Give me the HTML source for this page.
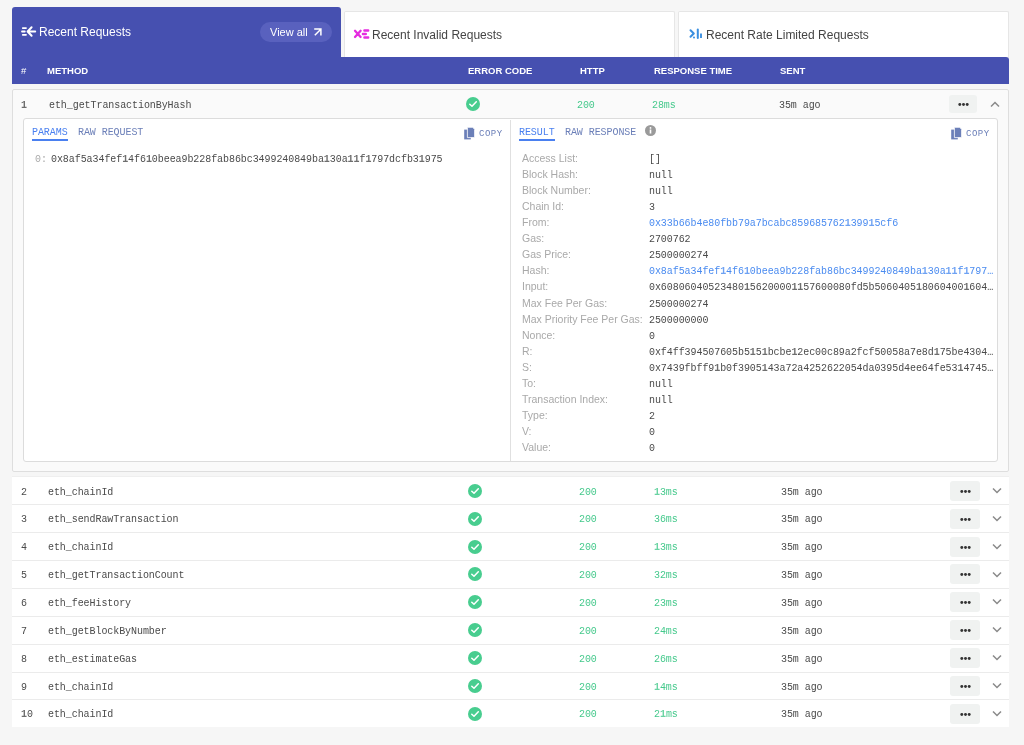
<!DOCTYPE html>
<html><head><meta charset="utf-8">
<style>
*{box-sizing:border-box;margin:0;padding:0}
html,body{width:1024px;height:745px;overflow:hidden;background:#f6f6f6;font-family:"Liberation Sans",sans-serif;}
.abs{position:absolute}
.mono{font-family:"Liberation Mono",monospace;font-size:10px;letter-spacing:-0.07px;white-space:nowrap;transform:scaleY(1.15);transform-origin:0 50%}
.tab{position:absolute;top:11px;height:47px;background:#fff;border:1px solid #e6e6e6;border-bottom:none;border-radius:2px 2px 0 0;}
.t{position:absolute;font-size:12px;color:#444;white-space:nowrap}
.g{color:#45c98c!important}
.dots{position:absolute;width:30px;height:20px;background:#f0f2f1;border-radius:3px;}
.fld{position:absolute;font-size:10.5px;color:#a9a9a9;line-height:16px;white-space:nowrap}
.val{position:absolute;line-height:16px;color:#4a4a4a;white-space:nowrap;overflow:hidden;text-overflow:ellipsis;width:347px}
.blue{color:#4a8bf0!important}
b{opacity:0.8}
</style></head><body><div style="position:absolute;left:0;top:0;width:1024px;height:745px;will-change:transform">
<div class="abs" style="left:12px;top:7px;width:329px;height:51px;background:#4650b0;border-radius:3px 3px 0 0"></div>
<div class="tab" style="left:344px;width:331px"></div>
<div class="tab" style="left:678px;width:331px"></div>
<div class="abs" style="left:12px;top:57px;width:997px;height:27px;background:#4650b0;border-radius:0 3px 0 0"></div>
<svg class="abs" style="left:18px;top:22px" width="22" height="18" viewBox="0 0 22 18"><g stroke="#fff" stroke-linecap="round" fill="none"><path d="M4.8 6.1 H8.0 M4.0 9.5 H6.8 M4.8 12.8 H8.0" stroke-width="1.8"/><path d="M13.6 5.3 L9.6 9.5 L13.6 13.7 M9.8 9.5 H17.2" stroke-width="2" stroke-linejoin="round"/></g></svg>
<span class="abs" style="left:39px;top:24px;font-size:12px;color:#fff;line-height:16px">Recent Requests</span>
<div class="abs" style="left:260px;top:22px;width:72px;height:20px;border-radius:10px;background:#5961be"></div>
<span class="abs" style="left:270px;top:24px;font-size:11px;color:#fff;line-height:16px">View all</span>
<svg class="abs" style="left:313px;top:27px" width="10" height="10" viewBox="0 0 10 10"><path d="M1.8 8.2 L7.3 2.7 M1.2 2 H7.9 V8.6" stroke="#fff" stroke-width="1.5" fill="none"/></svg>
<svg class="abs" style="left:350px;top:24px" width="25" height="20" viewBox="0 0 25 20"><g stroke="#e52ce0" stroke-linecap="round" fill="none"><path d="M5 6.8 L10.6 13 M10.6 6.8 L5 13" stroke-width="2.3"/><path d="M14.4 6.5 H18.2 M12.9 10 H15.8 M14.4 13.5 H18.2" stroke-width="2.4"/></g></svg>
<span class="abs" style="left:372px;top:27px;font-size:12px;color:#444;line-height:16px">Recent Invalid Requests</span>
<svg class="abs" style="left:684px;top:24px" width="25" height="20" viewBox="0 0 25 20"><g stroke="#3a8fe0" fill="none"><path d="M6.5 6.3 L9.8 9.5 L6.5 12.8" stroke-width="2" stroke-linecap="round" stroke-linejoin="round"/><path d="M13.8 5.5 V14" stroke-width="2" stroke-linecap="round"/><path d="M17 9.5 V14" stroke-width="1.9" stroke-linecap="butt"/></g><circle cx="10" cy="13.4" r="1" fill="#3a8fe0"/></svg>
<span class="abs" style="left:706px;top:27px;font-size:12px;color:#444;line-height:16px">Recent Rate Limited Requests</span>
<span class="abs" style="left:21px;top:65px;font-size:9.5px;color:#fff;line-height:12px">#</span>
<span class="abs" style="left:47px;top:65px;font-size:9.5px;font-weight:bold;color:#fff;line-height:12px">METHOD</span>
<span class="abs" style="left:468px;top:65px;font-size:9.5px;font-weight:bold;color:#fff;line-height:12px">ERROR CODE</span>
<span class="abs" style="left:580px;top:65px;font-size:9.5px;font-weight:bold;color:#fff;line-height:12px">HTTP</span>
<span class="abs" style="left:654px;top:65px;font-size:9.5px;font-weight:bold;color:#fff;line-height:12px">RESPONSE TIME</span>
<span class="abs" style="left:780px;top:65px;font-size:9.5px;font-weight:bold;color:#fff;line-height:12px">SENT</span>
<div class="abs" style="left:12px;top:89px;width:997px;height:383px;background:#fafafa;border:1px solid #dedede;border-radius:2px"></div>
<span class="abs mono" style="left:21px;top:98px;line-height:16px;color:#4a4a4a;"><b>1</b></span>
<span class="abs mono" style="left:49px;top:98px;line-height:16px;color:#4a4a4a;">eth_getTransactionByHash</span>
<svg class="abs" style="left:466px;top:97px" width="14" height="14" viewBox="0 0 14 14"><circle cx="7" cy="7" r="7" fill="#48cd8f"/><path d="M3.8 7.2 L6 9.3 L10.3 4.8" stroke="#fff" stroke-width="1.5" fill="none" stroke-linecap="round" stroke-linejoin="round"/></svg>
<span class="abs mono" style="left:577px;top:98px;line-height:16px;color:#4a4a4a;color:#45c98c">200</span>
<span class="abs mono" style="left:652px;top:98px;line-height:16px;color:#4a4a4a;color:#45c98c">28ms</span>
<span class="abs mono" style="left:779px;top:98px;line-height:16px;color:#4a4a4a;">35m ago</span>
<div class="dots" style="left:949px;top:95px;width:28px;height:18px"></div>
<svg class="abs" style="left:957.5px;top:101.5px" width="11" height="5" viewBox="0 0 11 5"><g fill="#333"><circle cx="1.8" cy="2.5" r="1.45"/><circle cx="5.5" cy="2.5" r="1.45"/><circle cx="9.2" cy="2.5" r="1.45"/></g></svg>
<svg class="abs" style="left:990px;top:101px" width="10" height="7" viewBox="0 0 10 7"><path d="M1 5.5 L5 1.5 L9 5.5" stroke="#8a8a8a" stroke-width="1.5" fill="none"/></svg>
<div class="abs" style="left:23px;top:118px;width:975px;height:344px;background:#fff;border:1px solid #dcdcdc;border-radius:3px"></div>
<span class="abs mono" style="left:32px;top:126px;line-height:14px;color:#4a4a4a;color:#4a80f0">PARAMS</span>
<div class="abs" style="left:32px;top:139px;width:36px;height:2px;background:#4a80f0"></div>
<span class="abs mono" style="left:78px;top:126px;line-height:14px;color:#4a4a4a;color:#6b7fb8">RAW REQUEST</span>
<svg class="abs" style="left:464px;top:126.5px" width="12" height="13" viewBox="0 0 12 13"><rect x="0.2" y="2.6" width="6.6" height="9.8" fill="#6b7fb8"/><path d="M3.4 0.3 H8.6 L10.6 2.3 V10.6 H3.4 Z" fill="#6b7fb8" stroke="#fff" stroke-width="0.8"/></svg>
<span class="abs" style="left:479px;top:128px;font-family:Liberation Mono,monospace;font-size:9px;letter-spacing:0.5px;color:#6b7fb8;line-height:12px">COPY</span>
<span class="abs mono" style="left:35px;top:152px;line-height:16px;color:#4a4a4a;color:#aaa">0:</span>
<span class="abs mono" style="left:51px;top:152px;line-height:16px;color:#4a4a4a;">0x8af5a34fef<b>1</b>4f6<b>1</b>0beea9b228fab86bc3499240849ba<b>1</b>30a<b>1</b><b>1</b>f<b>1</b>797dcfb3<b>1</b>975</span>
<div class="abs" style="left:510px;top:120px;width:1px;height:341px;background:#e0e0e0"></div>
<span class="abs mono" style="left:519px;top:126px;line-height:14px;color:#4a4a4a;color:#4a80f0">RESULT</span>
<div class="abs" style="left:519px;top:139px;width:36px;height:2px;background:#4a80f0"></div>
<span class="abs mono" style="left:565px;top:126px;line-height:14px;color:#4a4a4a;color:#6b7fb8">RAW RESPONSE</span>
<svg class="abs" style="left:645px;top:124.5px" width="11" height="11" viewBox="0 0 11 11"><circle cx="5.5" cy="5.5" r="5.5" fill="#9a9a9a"/><rect x="4.7" y="4.5" width="1.6" height="4" fill="#fff"/><circle cx="5.5" cy="2.9" r="0.9" fill="#fff"/></svg>
<svg class="abs" style="left:951px;top:126.5px" width="12" height="13" viewBox="0 0 12 13"><rect x="0.2" y="2.6" width="6.6" height="9.8" fill="#6b7fb8"/><path d="M3.4 0.3 H8.6 L10.6 2.3 V10.6 H3.4 Z" fill="#6b7fb8" stroke="#fff" stroke-width="0.8"/></svg>
<span class="abs" style="left:966px;top:128px;font-family:Liberation Mono,monospace;font-size:9px;letter-spacing:0.5px;color:#6b7fb8;line-height:12px">COPY</span>
<span class="fld" style="left:522px;top:150.0px">Access List:</span>
<span class="abs mono val " style="left:649px;top:152.0px">[]</span>
<span class="fld" style="left:522px;top:166.06px">Block Hash:</span>
<span class="abs mono val " style="left:649px;top:168.06px">null</span>
<span class="fld" style="left:522px;top:182.12px">Block Number:</span>
<span class="abs mono val " style="left:649px;top:184.12px">null</span>
<span class="fld" style="left:522px;top:198.18px">Chain Id:</span>
<span class="abs mono val " style="left:649px;top:200.18px">3</span>
<span class="fld" style="left:522px;top:214.24px">From:</span>
<span class="abs mono val blue" style="left:649px;top:216.24px">0x33b66b4e80fbb79a7bcabc859685762<b>1</b>399<b>1</b>5cf6</span>
<span class="fld" style="left:522px;top:230.3px">Gas:</span>
<span class="abs mono val " style="left:649px;top:232.3px">2700762</span>
<span class="fld" style="left:522px;top:246.36px">Gas Price:</span>
<span class="abs mono val " style="left:649px;top:248.36px">2500000274</span>
<span class="fld" style="left:522px;top:262.42px">Hash:</span>
<span class="abs mono val blue" style="left:649px;top:264.42px">0x8af5a34fef<b>1</b>4f6<b>1</b>0beea9b228fab86bc3499240849ba<b>1</b>30a<b>1</b><b>1</b>f<b>1</b>797dcfb3<b>1</b>975</span>
<span class="fld" style="left:522px;top:278.48px">Input:</span>
<span class="abs mono val " style="left:649px;top:280.48px">0x60806040523480<b>1</b>5620000<b>1</b><b>1</b>57600080fd5b5060405<b>1</b>8060400<b>1</b>6040528060058<b>1</b></span>
<span class="fld" style="left:522px;top:294.54px">Max Fee Per Gas:</span>
<span class="abs mono val " style="left:649px;top:296.54px">2500000274</span>
<span class="fld" style="left:522px;top:310.6px">Max Priority Fee Per Gas:</span>
<span class="abs mono val " style="left:649px;top:312.6px">2500000000</span>
<span class="fld" style="left:522px;top:326.66px">Nonce:</span>
<span class="abs mono val " style="left:649px;top:328.66px">0</span>
<span class="fld" style="left:522px;top:342.72px">R:</span>
<span class="abs mono val " style="left:649px;top:344.72px">0xf4ff394507605b5<b>1</b>5<b>1</b>bcbe<b>1</b>2ec00c89a2fcf50058a7e8d<b>1</b>75be4304a<b>1</b>b2c3d4e</span>
<span class="fld" style="left:522px;top:358.78px">S:</span>
<span class="abs mono val " style="left:649px;top:360.78px">0x7439fbff9<b>1</b>b0f3905<b>1</b>43a72a4252622054da0395d4ee64fe53<b>1</b>4745a<b>1</b>b2c3d4e</span>
<span class="fld" style="left:522px;top:374.84px">To:</span>
<span class="abs mono val " style="left:649px;top:376.84px">null</span>
<span class="fld" style="left:522px;top:390.9px">Transaction Index:</span>
<span class="abs mono val " style="left:649px;top:392.9px">null</span>
<span class="fld" style="left:522px;top:406.96px">Type:</span>
<span class="abs mono val " style="left:649px;top:408.96px">2</span>
<span class="fld" style="left:522px;top:423.02px">V:</span>
<span class="abs mono val " style="left:649px;top:425.02px">0</span>
<span class="fld" style="left:522px;top:439.08px">Value:</span>
<span class="abs mono val " style="left:649px;top:441.08px">0</span>
<div class="abs" style="left:12px;top:476px;width:997px;height:251px;background:#fff;border-top:1px solid #efefef"></div>
<span class="abs mono" style="left:21px;top:484.5px;line-height:16px;color:#4a4a4a;">2</span>
<span class="abs mono" style="left:48px;top:484.5px;line-height:16px;color:#4a4a4a;">eth_chainId</span>
<svg class="abs" style="left:468px;top:484px" width="14" height="14" viewBox="0 0 14 14"><circle cx="7" cy="7" r="7" fill="#48cd8f"/><path d="M3.8 7.2 L6 9.3 L10.3 4.8" stroke="#fff" stroke-width="1.5" fill="none" stroke-linecap="round" stroke-linejoin="round"/></svg>
<span class="abs mono" style="left:579px;top:484.5px;line-height:16px;color:#4a4a4a;color:#45c98c">200</span>
<span class="abs mono" style="left:654px;top:484.5px;line-height:16px;color:#4a4a4a;color:#45c98c"><b>1</b>3ms</span>
<span class="abs mono" style="left:781px;top:484.5px;line-height:16px;color:#4a4a4a;">35m ago</span>
<div class="dots" style="left:950px;top:481px;width:30px;height:20px"></div>
<svg class="abs" style="left:959.5px;top:488.5px" width="11" height="5" viewBox="0 0 11 5"><g fill="#333"><circle cx="1.8" cy="2.5" r="1.45"/><circle cx="5.5" cy="2.5" r="1.45"/><circle cx="9.2" cy="2.5" r="1.45"/></g></svg>
<svg class="abs" style="left:992px;top:487px" width="10" height="7" viewBox="0 0 10 7"><path d="M1 1.5 L5 5.5 L9 1.5" stroke="#8a8a8a" stroke-width="1.5" fill="none"/></svg>
<div class="abs" style="left:12px;top:504px;width:997px;height:1px;background:#ebebeb"></div>
<span class="abs mono" style="left:21px;top:512.36px;line-height:16px;color:#4a4a4a;">3</span>
<span class="abs mono" style="left:48px;top:512.36px;line-height:16px;color:#4a4a4a;">eth_sendRawTransaction</span>
<svg class="abs" style="left:468px;top:512px" width="14" height="14" viewBox="0 0 14 14"><circle cx="7" cy="7" r="7" fill="#48cd8f"/><path d="M3.8 7.2 L6 9.3 L10.3 4.8" stroke="#fff" stroke-width="1.5" fill="none" stroke-linecap="round" stroke-linejoin="round"/></svg>
<span class="abs mono" style="left:579px;top:512.36px;line-height:16px;color:#4a4a4a;color:#45c98c">200</span>
<span class="abs mono" style="left:654px;top:512.36px;line-height:16px;color:#4a4a4a;color:#45c98c">36ms</span>
<span class="abs mono" style="left:781px;top:512.36px;line-height:16px;color:#4a4a4a;">35m ago</span>
<div class="dots" style="left:950px;top:509px;width:30px;height:20px"></div>
<svg class="abs" style="left:959.5px;top:516.5px" width="11" height="5" viewBox="0 0 11 5"><g fill="#333"><circle cx="1.8" cy="2.5" r="1.45"/><circle cx="5.5" cy="2.5" r="1.45"/><circle cx="9.2" cy="2.5" r="1.45"/></g></svg>
<svg class="abs" style="left:992px;top:515px" width="10" height="7" viewBox="0 0 10 7"><path d="M1 1.5 L5 5.5 L9 1.5" stroke="#8a8a8a" stroke-width="1.5" fill="none"/></svg>
<div class="abs" style="left:12px;top:532px;width:997px;height:1px;background:#ebebeb"></div>
<span class="abs mono" style="left:21px;top:540.22px;line-height:16px;color:#4a4a4a;">4</span>
<span class="abs mono" style="left:48px;top:540.22px;line-height:16px;color:#4a4a4a;">eth_chainId</span>
<svg class="abs" style="left:468px;top:540px" width="14" height="14" viewBox="0 0 14 14"><circle cx="7" cy="7" r="7" fill="#48cd8f"/><path d="M3.8 7.2 L6 9.3 L10.3 4.8" stroke="#fff" stroke-width="1.5" fill="none" stroke-linecap="round" stroke-linejoin="round"/></svg>
<span class="abs mono" style="left:579px;top:540.22px;line-height:16px;color:#4a4a4a;color:#45c98c">200</span>
<span class="abs mono" style="left:654px;top:540.22px;line-height:16px;color:#4a4a4a;color:#45c98c"><b>1</b>3ms</span>
<span class="abs mono" style="left:781px;top:540.22px;line-height:16px;color:#4a4a4a;">35m ago</span>
<div class="dots" style="left:950px;top:537px;width:30px;height:20px"></div>
<svg class="abs" style="left:959.5px;top:544.5px" width="11" height="5" viewBox="0 0 11 5"><g fill="#333"><circle cx="1.8" cy="2.5" r="1.45"/><circle cx="5.5" cy="2.5" r="1.45"/><circle cx="9.2" cy="2.5" r="1.45"/></g></svg>
<svg class="abs" style="left:992px;top:543px" width="10" height="7" viewBox="0 0 10 7"><path d="M1 1.5 L5 5.5 L9 1.5" stroke="#8a8a8a" stroke-width="1.5" fill="none"/></svg>
<div class="abs" style="left:12px;top:560px;width:997px;height:1px;background:#ebebeb"></div>
<span class="abs mono" style="left:21px;top:568.08px;line-height:16px;color:#4a4a4a;">5</span>
<span class="abs mono" style="left:48px;top:568.08px;line-height:16px;color:#4a4a4a;">eth_getTransactionCount</span>
<svg class="abs" style="left:468px;top:567px" width="14" height="14" viewBox="0 0 14 14"><circle cx="7" cy="7" r="7" fill="#48cd8f"/><path d="M3.8 7.2 L6 9.3 L10.3 4.8" stroke="#fff" stroke-width="1.5" fill="none" stroke-linecap="round" stroke-linejoin="round"/></svg>
<span class="abs mono" style="left:579px;top:568.08px;line-height:16px;color:#4a4a4a;color:#45c98c">200</span>
<span class="abs mono" style="left:654px;top:568.08px;line-height:16px;color:#4a4a4a;color:#45c98c">32ms</span>
<span class="abs mono" style="left:781px;top:568.08px;line-height:16px;color:#4a4a4a;">35m ago</span>
<div class="dots" style="left:950px;top:564px;width:30px;height:20px"></div>
<svg class="abs" style="left:959.5px;top:571.5px" width="11" height="5" viewBox="0 0 11 5"><g fill="#333"><circle cx="1.8" cy="2.5" r="1.45"/><circle cx="5.5" cy="2.5" r="1.45"/><circle cx="9.2" cy="2.5" r="1.45"/></g></svg>
<svg class="abs" style="left:992px;top:571px" width="10" height="7" viewBox="0 0 10 7"><path d="M1 1.5 L5 5.5 L9 1.5" stroke="#8a8a8a" stroke-width="1.5" fill="none"/></svg>
<div class="abs" style="left:12px;top:588px;width:997px;height:1px;background:#ebebeb"></div>
<span class="abs mono" style="left:21px;top:595.94px;line-height:16px;color:#4a4a4a;">6</span>
<span class="abs mono" style="left:48px;top:595.94px;line-height:16px;color:#4a4a4a;">eth_feeHistory</span>
<svg class="abs" style="left:468px;top:595px" width="14" height="14" viewBox="0 0 14 14"><circle cx="7" cy="7" r="7" fill="#48cd8f"/><path d="M3.8 7.2 L6 9.3 L10.3 4.8" stroke="#fff" stroke-width="1.5" fill="none" stroke-linecap="round" stroke-linejoin="round"/></svg>
<span class="abs mono" style="left:579px;top:595.94px;line-height:16px;color:#4a4a4a;color:#45c98c">200</span>
<span class="abs mono" style="left:654px;top:595.94px;line-height:16px;color:#4a4a4a;color:#45c98c">23ms</span>
<span class="abs mono" style="left:781px;top:595.94px;line-height:16px;color:#4a4a4a;">35m ago</span>
<div class="dots" style="left:950px;top:592px;width:30px;height:20px"></div>
<svg class="abs" style="left:959.5px;top:599.5px" width="11" height="5" viewBox="0 0 11 5"><g fill="#333"><circle cx="1.8" cy="2.5" r="1.45"/><circle cx="5.5" cy="2.5" r="1.45"/><circle cx="9.2" cy="2.5" r="1.45"/></g></svg>
<svg class="abs" style="left:992px;top:598px" width="10" height="7" viewBox="0 0 10 7"><path d="M1 1.5 L5 5.5 L9 1.5" stroke="#8a8a8a" stroke-width="1.5" fill="none"/></svg>
<div class="abs" style="left:12px;top:616px;width:997px;height:1px;background:#ebebeb"></div>
<span class="abs mono" style="left:21px;top:623.8px;line-height:16px;color:#4a4a4a;">7</span>
<span class="abs mono" style="left:48px;top:623.8px;line-height:16px;color:#4a4a4a;">eth_getBlockByNumber</span>
<svg class="abs" style="left:468px;top:623px" width="14" height="14" viewBox="0 0 14 14"><circle cx="7" cy="7" r="7" fill="#48cd8f"/><path d="M3.8 7.2 L6 9.3 L10.3 4.8" stroke="#fff" stroke-width="1.5" fill="none" stroke-linecap="round" stroke-linejoin="round"/></svg>
<span class="abs mono" style="left:579px;top:623.8px;line-height:16px;color:#4a4a4a;color:#45c98c">200</span>
<span class="abs mono" style="left:654px;top:623.8px;line-height:16px;color:#4a4a4a;color:#45c98c">24ms</span>
<span class="abs mono" style="left:781px;top:623.8px;line-height:16px;color:#4a4a4a;">35m ago</span>
<div class="dots" style="left:950px;top:620px;width:30px;height:20px"></div>
<svg class="abs" style="left:959.5px;top:627.5px" width="11" height="5" viewBox="0 0 11 5"><g fill="#333"><circle cx="1.8" cy="2.5" r="1.45"/><circle cx="5.5" cy="2.5" r="1.45"/><circle cx="9.2" cy="2.5" r="1.45"/></g></svg>
<svg class="abs" style="left:992px;top:626px" width="10" height="7" viewBox="0 0 10 7"><path d="M1 1.5 L5 5.5 L9 1.5" stroke="#8a8a8a" stroke-width="1.5" fill="none"/></svg>
<div class="abs" style="left:12px;top:644px;width:997px;height:1px;background:#ebebeb"></div>
<span class="abs mono" style="left:21px;top:651.66px;line-height:16px;color:#4a4a4a;">8</span>
<span class="abs mono" style="left:48px;top:651.66px;line-height:16px;color:#4a4a4a;">eth_estimateGas</span>
<svg class="abs" style="left:468px;top:651px" width="14" height="14" viewBox="0 0 14 14"><circle cx="7" cy="7" r="7" fill="#48cd8f"/><path d="M3.8 7.2 L6 9.3 L10.3 4.8" stroke="#fff" stroke-width="1.5" fill="none" stroke-linecap="round" stroke-linejoin="round"/></svg>
<span class="abs mono" style="left:579px;top:651.66px;line-height:16px;color:#4a4a4a;color:#45c98c">200</span>
<span class="abs mono" style="left:654px;top:651.66px;line-height:16px;color:#4a4a4a;color:#45c98c">26ms</span>
<span class="abs mono" style="left:781px;top:651.66px;line-height:16px;color:#4a4a4a;">35m ago</span>
<div class="dots" style="left:950px;top:648px;width:30px;height:20px"></div>
<svg class="abs" style="left:959.5px;top:655.5px" width="11" height="5" viewBox="0 0 11 5"><g fill="#333"><circle cx="1.8" cy="2.5" r="1.45"/><circle cx="5.5" cy="2.5" r="1.45"/><circle cx="9.2" cy="2.5" r="1.45"/></g></svg>
<svg class="abs" style="left:992px;top:654px" width="10" height="7" viewBox="0 0 10 7"><path d="M1 1.5 L5 5.5 L9 1.5" stroke="#8a8a8a" stroke-width="1.5" fill="none"/></svg>
<div class="abs" style="left:12px;top:672px;width:997px;height:1px;background:#ebebeb"></div>
<span class="abs mono" style="left:21px;top:679.52px;line-height:16px;color:#4a4a4a;">9</span>
<span class="abs mono" style="left:48px;top:679.52px;line-height:16px;color:#4a4a4a;">eth_chainId</span>
<svg class="abs" style="left:468px;top:679px" width="14" height="14" viewBox="0 0 14 14"><circle cx="7" cy="7" r="7" fill="#48cd8f"/><path d="M3.8 7.2 L6 9.3 L10.3 4.8" stroke="#fff" stroke-width="1.5" fill="none" stroke-linecap="round" stroke-linejoin="round"/></svg>
<span class="abs mono" style="left:579px;top:679.52px;line-height:16px;color:#4a4a4a;color:#45c98c">200</span>
<span class="abs mono" style="left:654px;top:679.52px;line-height:16px;color:#4a4a4a;color:#45c98c"><b>1</b>4ms</span>
<span class="abs mono" style="left:781px;top:679.52px;line-height:16px;color:#4a4a4a;">35m ago</span>
<div class="dots" style="left:950px;top:676px;width:30px;height:20px"></div>
<svg class="abs" style="left:959.5px;top:683.5px" width="11" height="5" viewBox="0 0 11 5"><g fill="#333"><circle cx="1.8" cy="2.5" r="1.45"/><circle cx="5.5" cy="2.5" r="1.45"/><circle cx="9.2" cy="2.5" r="1.45"/></g></svg>
<svg class="abs" style="left:992px;top:682px" width="10" height="7" viewBox="0 0 10 7"><path d="M1 1.5 L5 5.5 L9 1.5" stroke="#8a8a8a" stroke-width="1.5" fill="none"/></svg>
<div class="abs" style="left:12px;top:699px;width:997px;height:1px;background:#ebebeb"></div>
<span class="abs mono" style="left:21px;top:707.38px;line-height:16px;color:#4a4a4a;"><b>1</b>0</span>
<span class="abs mono" style="left:48px;top:707.38px;line-height:16px;color:#4a4a4a;">eth_chainId</span>
<svg class="abs" style="left:468px;top:707px" width="14" height="14" viewBox="0 0 14 14"><circle cx="7" cy="7" r="7" fill="#48cd8f"/><path d="M3.8 7.2 L6 9.3 L10.3 4.8" stroke="#fff" stroke-width="1.5" fill="none" stroke-linecap="round" stroke-linejoin="round"/></svg>
<span class="abs mono" style="left:579px;top:707.38px;line-height:16px;color:#4a4a4a;color:#45c98c">200</span>
<span class="abs mono" style="left:654px;top:707.38px;line-height:16px;color:#4a4a4a;color:#45c98c">2<b>1</b>ms</span>
<span class="abs mono" style="left:781px;top:707.38px;line-height:16px;color:#4a4a4a;">35m ago</span>
<div class="dots" style="left:950px;top:704px;width:30px;height:20px"></div>
<svg class="abs" style="left:959.5px;top:711.5px" width="11" height="5" viewBox="0 0 11 5"><g fill="#333"><circle cx="1.8" cy="2.5" r="1.45"/><circle cx="5.5" cy="2.5" r="1.45"/><circle cx="9.2" cy="2.5" r="1.45"/></g></svg>
<svg class="abs" style="left:992px;top:710px" width="10" height="7" viewBox="0 0 10 7"><path d="M1 1.5 L5 5.5 L9 1.5" stroke="#8a8a8a" stroke-width="1.5" fill="none"/></svg>
</div></body></html>
